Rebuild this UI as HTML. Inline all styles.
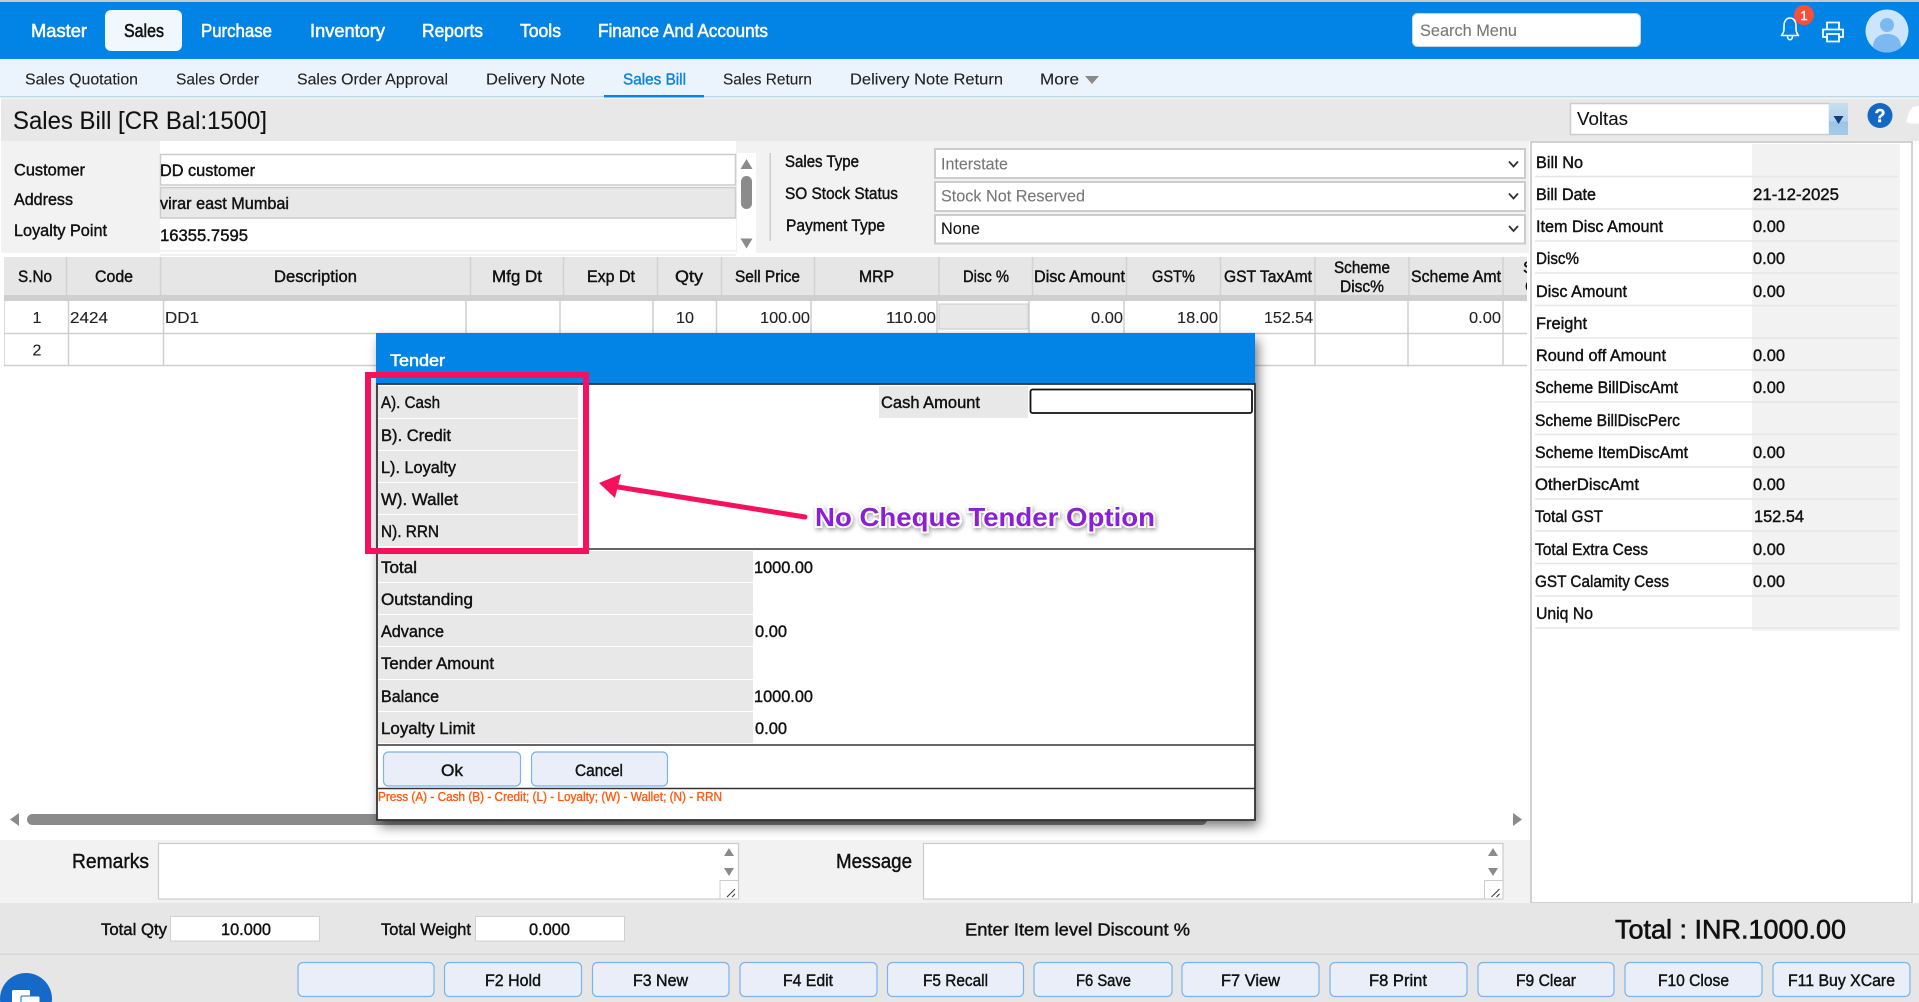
<!DOCTYPE html>
<html lang="en"><head><meta charset="utf-8"><title>Sales Bill</title>
<style>
html,body{margin:0;padding:0;background:#fff;width:1919px;height:1002px;overflow:hidden}
svg{display:block}
text{font-family:"Liberation Sans",sans-serif;font-size:16.5px;fill:#111;stroke:#111;stroke-width:.42}
.nav text{fill:#fff;stroke:#fff;font-size:18px;stroke-width:.55}
.sub text{stroke-width:.12;stroke:#222;font-size:16px;fill:#222}
.hd text{font-size:16.5px}
.td text{stroke-width:.12;stroke:#222;font-size:16px;fill:#222}
.wl{fill:#e8e8e8}
.ln{stroke:#d2d2d2;stroke-width:1.5}
.bt{fill:#e9eef8;stroke:#7ab3ee;stroke-width:1.2}
.cell{stroke:#cfcfcf;stroke-width:1.5}
</style></head><body>
<svg xmlns="http://www.w3.org/2000/svg" width="1919" height="1002" viewBox="0 0 1919 1002">
<defs>
<filter id="sh" x="-5%" y="-5%" width="110%" height="110%"><feGaussianBlur stdDeviation="6"/></filter>
<linearGradient id="ag" x1="0" y1="0" x2="0" y2="1"><stop offset="0" stop-color="#c7dff0"/><stop offset=".55" stop-color="#b5d4ec"/><stop offset=".6" stop-color="#9cc4e6"/><stop offset="1" stop-color="#a5cbea"/></linearGradient>
<clipPath id="tb"><rect x="4" y="250" width="1523" height="120"/></clipPath>
</defs>
<rect width="1919" height="1002" fill="#fff"/>
<rect width="1919" height="2" fill="#c9c9c9"/>
<rect y="2" width="1919" height="57" fill="#0284e7"/>
<rect x="105" y="10" width="77" height="41" rx="6" fill="#f0f7fd"/>
<g class="nav">
<text x="31" y="37" textLength="56" lengthAdjust="spacingAndGlyphs">Master</text>
<text x="124" y="37" textLength="40" lengthAdjust="spacingAndGlyphs" style="fill:#111;stroke:#111">Sales</text>
<text x="201" y="37" textLength="71" lengthAdjust="spacingAndGlyphs">Purchase</text>
<text x="310" y="37" textLength="75" lengthAdjust="spacingAndGlyphs">Inventory</text>
<text x="422" y="37" textLength="61" lengthAdjust="spacingAndGlyphs">Reports</text>
<text x="520" y="37" textLength="41" lengthAdjust="spacingAndGlyphs">Tools</text>
<text x="598" y="37" textLength="170" lengthAdjust="spacingAndGlyphs">Finance And Accounts</text>
</g>
<rect x="1412.5" y="13.5" width="228" height="33" rx="5" fill="#fff" stroke="#c5d5e2"/>
<text x="1420" y="36" textLength="97" lengthAdjust="spacingAndGlyphs" style="fill:#777;stroke:#777;stroke-width:.1">Search Menu</text>
<path d="M1781.500 35.500c2.500-3 2.500-5 2.500-9.500c0-5 2.500-8 6-8s6 3 6 8c0 4.500 0 6.500 2.500 9.500zM1787.500 36c0 5 5 5 5 0" fill="none" stroke="#fff" stroke-width="1.600" stroke-linejoin="round"/>
<circle cx="1804" cy="15" r="10" fill="#f4503c"/>
<text x="1804" y="20" text-anchor="middle" style="fill:#fff;stroke:#fff;font-size:13px">1</text>
<path d="M1827 30v-7.500h12v7.500M1827 37h-4v-7.500h20v7.500h-4M1827 34h12v7.500h-12z" fill="none" stroke="#fff" stroke-width="1.800"/>
<circle cx="1887" cy="31" r="21.500" fill="#cbe6fc"/>
<circle cx="1887" cy="25" r="7" fill="#7db8f0"/>
<path d="M1873 47c0-8 5-13 14-13s14 5 14 13c-4 4-9 5.500-14 5.500s-10-1.500-14-5.500z" fill="#7db8f0"/>

<rect y="59" width="1919" height="37" fill="#ebf4fc"/>
<rect y="96" width="1919" height="1.500" fill="#bcd7ea"/>
<g class="sub">
<text x="25" y="84.500" textLength="113" lengthAdjust="spacingAndGlyphs">Sales Quotation</text>
<text x="176" y="84.500" textLength="83" lengthAdjust="spacingAndGlyphs">Sales Order</text>
<text x="297" y="84.500" textLength="151" lengthAdjust="spacingAndGlyphs">Sales Order Approval</text>
<text x="486" y="84.500" textLength="99" lengthAdjust="spacingAndGlyphs">Delivery Note</text>
<text x="623" y="84.500" textLength="63" lengthAdjust="spacingAndGlyphs" style="fill:#0a84e3;stroke:#0a84e3;stroke-width:.4">Sales Bill</text>
<text x="723" y="84.500" textLength="89" lengthAdjust="spacingAndGlyphs">Sales Return</text>
<text x="850" y="84.500" textLength="153" lengthAdjust="spacingAndGlyphs">Delivery Note Return</text>
<text x="1040" y="84.500" textLength="39" lengthAdjust="spacingAndGlyphs">More</text>
</g>
<path d="M1085 76h14l-7 8z" fill="#8a8a8a"/>
<rect x="604" y="95" width="100" height="2.500" fill="#0a84e3"/>

<rect x="1" y="98.500" width="1918" height="42.500" fill="#e8e8e8"/>
<text x="13" y="129" textLength="254" lengthAdjust="spacingAndGlyphs" style="font-size:25px;stroke-width:.1">Sales Bill [CR Bal:1500]</text>
<rect x="1570.500" y="103.500" width="259" height="31" fill="#fff" stroke="#ccc" stroke-width="1.500"/>
<rect x="1829" y="103" width="19" height="32" fill="url(#ag)"/>
<path d="M1833.500 116h10l-5 8z" fill="#123f80"/>
<text x="1577" y="125" textLength="51" lengthAdjust="spacingAndGlyphs" style="font-size:18px;stroke-width:.1">Voltas</text>
<circle cx="1880" cy="115.500" r="12.500" fill="#1468c5"/>
<text x="1880" y="122" text-anchor="middle" style="fill:#fff;stroke:#fff;font-size:18px;font-weight:bold">?</text>
<path d="M1919 106l-6 1l-4 5l-3 10l4 1.500h9z" fill="#fff"/>

<rect x="1" y="141" width="1528" height="112" fill="#f2f2f2"/>
<rect x="160" y="254" width="576" height="2" fill="#f2f2f2"/>
<text x="14" y="175.500" textLength="71" lengthAdjust="spacingAndGlyphs">Customer</text>
<text x="14" y="205" textLength="59" lengthAdjust="spacingAndGlyphs">Address</text>
<text x="14" y="236" textLength="93" lengthAdjust="spacingAndGlyphs">Loyalty Point</text>
<rect x="160" y="141" width="576" height="112" fill="#fff"/>
<rect x="160.500" y="154.500" width="575" height="30.500" fill="#fff" stroke="#ccc" stroke-width="1.500"/>
<rect x="160.500" y="187.500" width="575" height="30.500" fill="#e8e8e8" stroke="#ccc" stroke-width="1.500"/>
<rect x="160" y="219" width="576" height="31" fill="#fff"/>
<rect x="160" y="250" width="576" height="1.500" fill="#eee"/>
<text x="160" y="176" textLength="95" lengthAdjust="spacingAndGlyphs">DD customer</text>
<text x="160" y="209" textLength="129" lengthAdjust="spacingAndGlyphs">virar east Mumbai</text>
<text x="160" y="241" textLength="88" lengthAdjust="spacingAndGlyphs">16355.7595</text>
<rect x="737" y="153" width="19" height="100" fill="#fff"/>
<path d="M740.500 169h12l-6-10z" fill="#8b8b8b"/>
<rect x="741" y="176" width="11" height="33" rx="5.500" fill="#8b8b8b"/>
<path d="M740.500 238.500h12l-6 10z" fill="#8b8b8b"/>
<rect x="769.500" y="153" width="1.500" height="88" fill="#ccc"/>
<text x="785" y="167" textLength="74" lengthAdjust="spacingAndGlyphs">Sales Type</text>
<text x="785" y="199" textLength="113" lengthAdjust="spacingAndGlyphs">SO Stock Status</text>
<text x="786" y="231" textLength="99" lengthAdjust="spacingAndGlyphs">Payment Type</text>
<g fill="#fff" stroke="#ccc" stroke-width="2">
<rect x="935" y="149" width="590" height="29"/>
<rect x="935" y="182" width="590" height="29"/>
<rect x="935" y="215" width="590" height="28.500"/>
</g>
<text x="941" y="169.500" textLength="67" lengthAdjust="spacingAndGlyphs" style="fill:#777;stroke:#777;stroke-width:.1">Interstate</text>
<text x="941" y="201.500" textLength="144" lengthAdjust="spacingAndGlyphs" style="fill:#777;stroke:#777;stroke-width:.1">Stock Not Reserved</text>
<text x="941" y="234" textLength="39" lengthAdjust="spacingAndGlyphs" style="stroke-width:.1">None</text>
<path d="M1509 161.500l4.500 5l4.500-5M1509 193.500l4.500 5l4.500-5M1509 226l4.500 5l4.500-5" fill="none" stroke="#333" stroke-width="1.800"/>

<g clip-path="url(#tb)">
<rect x="4" y="257" width="1530" height="38" fill="#e6e6e6"/>
<rect x="4" y="295" width="1530" height="6" fill="#cfcfcf"/>
<g class="ln">
<path d="M66.500 257v38M160.500 257v38M470.500 257v38M563.500 257v38M657.500 257v38M721.500 257v38M814.500 257v38M939 257v38M1032.500 257v38M1126.500 257v38M1220.500 257v38M1315 257v38M1409 257v38M1503 257v38"/>
</g>
<g class="hd">
<text x="18" y="282" textLength="34" lengthAdjust="spacingAndGlyphs">S.No</text>
<text x="95" y="282" textLength="38" lengthAdjust="spacingAndGlyphs">Code</text>
<text x="274" y="282" textLength="83" lengthAdjust="spacingAndGlyphs">Description</text>
<text x="492" y="282" textLength="50" lengthAdjust="spacingAndGlyphs">Mfg Dt</text>
<text x="587" y="282" textLength="48" lengthAdjust="spacingAndGlyphs">Exp Dt</text>
<text x="675" y="282" textLength="28" lengthAdjust="spacingAndGlyphs">Qty</text>
<text x="735" y="282" textLength="65" lengthAdjust="spacingAndGlyphs">Sell Price</text>
<text x="859" y="282" textLength="35" lengthAdjust="spacingAndGlyphs">MRP</text>
<text x="963" y="282" textLength="46" lengthAdjust="spacingAndGlyphs">Disc %</text>
<text x="1034" y="282" textLength="91" lengthAdjust="spacingAndGlyphs">Disc Amount</text>
<text x="1152" y="282" textLength="43" lengthAdjust="spacingAndGlyphs">GST%</text>
<text x="1224" y="282" textLength="88" lengthAdjust="spacingAndGlyphs">GST TaxAmt</text>
<text x="1334" y="273" textLength="56" lengthAdjust="spacingAndGlyphs">Scheme</text>
<text x="1340" y="292" textLength="44" lengthAdjust="spacingAndGlyphs">Disc%</text>
<text x="1411" y="282" textLength="90" lengthAdjust="spacingAndGlyphs">Scheme Amt</text>
<text x="1523" y="273">S</text>
<text x="1525" y="292">C</text>
</g>
<g class="cell" fill="none">
<path d="M4 333.500h1530M4 365.500h1530M4 301v64"/>
<path d="M68.500 301v64M163.500 301v64M466 301v64M560 301v64M653 301v64M716.500 301v64M811 301v64M937 301v64M1029 301v64M1124 301v64M1220 301v64M1315 301v64M1408 301v64M1503 301v64"/>
</g>
<rect x="939" y="304" width="89" height="25" fill="#e8e8e8" stroke="#ccc"/>
<g class="td">
<text x="37" y="323" text-anchor="middle">1</text>
<text x="70" y="323" textLength="38" lengthAdjust="spacingAndGlyphs">2424</text>
<text x="165" y="323" textLength="34" lengthAdjust="spacingAndGlyphs">DD1</text>
<text x="676" y="323" textLength="18" lengthAdjust="spacingAndGlyphs">10</text>
<text x="760" y="323" textLength="50" lengthAdjust="spacingAndGlyphs">100.00</text>
<text x="886" y="323" textLength="50" lengthAdjust="spacingAndGlyphs">110.00</text>
<text x="1091" y="323" textLength="32" lengthAdjust="spacingAndGlyphs">0.00</text>
<text x="1177" y="323" textLength="41" lengthAdjust="spacingAndGlyphs">18.00</text>
<text x="1264" y="323" textLength="49" lengthAdjust="spacingAndGlyphs">152.54</text>
<text x="1469" y="323" textLength="32" lengthAdjust="spacingAndGlyphs">0.00</text>
<text x="37" y="355.500" text-anchor="middle">2</text>
</g>
</g>

<rect x="1531" y="142" width="381" height="761" fill="#fff" stroke="#ccc" stroke-width="1.800"/>
<rect x="1752" y="144" width="148" height="487" fill="#f2f2f2"/>
<path d="M1535 176.500h363M1535 209h363M1535 241h363M1535 273h363M1535 305.500h363M1535 338h363M1535 370h363M1535 402h363M1535 434.500h363M1535 467h363M1535 499h363M1535 531h363M1535 563.500h363M1535 596h363M1535 628h363" stroke="#e6e6e6" stroke-width="1.500"/>
<text x="1536" y="168" textLength="47" lengthAdjust="spacingAndGlyphs">Bill No</text>
<text x="1536" y="200" textLength="60" lengthAdjust="spacingAndGlyphs">Bill Date</text>
<text x="1536" y="232" textLength="127" lengthAdjust="spacingAndGlyphs">Item Disc Amount</text>
<text x="1536" y="264" textLength="43" lengthAdjust="spacingAndGlyphs">Disc%</text>
<text x="1536" y="297" textLength="91" lengthAdjust="spacingAndGlyphs">Disc Amount</text>
<text x="1536" y="329" textLength="51" lengthAdjust="spacingAndGlyphs">Freight</text>
<text x="1536" y="361" textLength="130" lengthAdjust="spacingAndGlyphs">Round off Amount</text>
<text x="1535" y="393" textLength="143" lengthAdjust="spacingAndGlyphs">Scheme BillDiscAmt</text>
<text x="1535" y="426" textLength="145" lengthAdjust="spacingAndGlyphs">Scheme BillDiscPerc</text>
<text x="1535" y="458" textLength="153" lengthAdjust="spacingAndGlyphs">Scheme ItemDiscAmt</text>
<text x="1535" y="490" textLength="104" lengthAdjust="spacingAndGlyphs">OtherDiscAmt</text>
<text x="1535" y="522" textLength="68" lengthAdjust="spacingAndGlyphs">Total GST</text>
<text x="1535" y="555" textLength="113" lengthAdjust="spacingAndGlyphs">Total Extra Cess</text>
<text x="1535" y="587" textLength="134" lengthAdjust="spacingAndGlyphs">GST Calamity Cess</text>
<text x="1536" y="619" textLength="57" lengthAdjust="spacingAndGlyphs">Uniq No</text>
<text x="1753" y="200" textLength="86" lengthAdjust="spacingAndGlyphs">21-12-2025</text>
<text x="1753" y="232" textLength="32" lengthAdjust="spacingAndGlyphs">0.00</text>
<text x="1753" y="264" textLength="32" lengthAdjust="spacingAndGlyphs">0.00</text>
<text x="1753" y="297" textLength="32" lengthAdjust="spacingAndGlyphs">0.00</text>
<text x="1753" y="361" textLength="32" lengthAdjust="spacingAndGlyphs">0.00</text>
<text x="1753" y="393" textLength="32" lengthAdjust="spacingAndGlyphs">0.00</text>
<text x="1753" y="458" textLength="32" lengthAdjust="spacingAndGlyphs">0.00</text>
<text x="1753" y="490" textLength="32" lengthAdjust="spacingAndGlyphs">0.00</text>
<text x="1754" y="522" textLength="50" lengthAdjust="spacingAndGlyphs">152.54</text>
<text x="1753" y="555" textLength="32" lengthAdjust="spacingAndGlyphs">0.00</text>
<text x="1753" y="587" textLength="32" lengthAdjust="spacingAndGlyphs">0.00</text>

<path d="M19 813v13l-9-6.500z" fill="#8b8b8b"/>
<rect x="27" y="814" width="1180" height="11" rx="5.500" fill="#8b8b8b"/>
<path d="M1513 813v13l9-6.500z" fill="#8b8b8b"/>

<rect y="840" width="1530" height="63" fill="#f2f2f2"/>
<text x="72" y="868" textLength="77" lengthAdjust="spacingAndGlyphs" style="font-size:20px">Remarks</text>
<text x="836" y="868" textLength="76" lengthAdjust="spacingAndGlyphs" style="font-size:20px">Message</text>
<rect x="158.500" y="843.500" width="580" height="55.500" fill="#fff" stroke="#ccc" stroke-width="1.200"/>
<rect x="923.500" y="843.500" width="579.500" height="55.500" fill="#fff" stroke="#ccc" stroke-width="1.200"/>
<g fill="#8b8b8b"><path d="M724 856h10l-5-8zM724 868h10l-5 8zM1488 856h10l-5-8zM1488 868h10l-5 8z"/></g>
<g fill="#fff" stroke="#ccc"><rect x="720" y="880.500" width="18.500" height="18.500"/><rect x="1484.500" y="880.500" width="18.500" height="18.500"/></g>
<path d="M727 897l8-8M732 897l3-3M1491.500 897l8-8M1496.500 897l3-3" stroke="#444" stroke-width="1.100"/>

<rect y="903" width="1919" height="99" fill="#e6e6e6"/>
<rect y="953.500" width="1919" height="1.500" fill="#d8d8d8"/>
<text x="101" y="935" textLength="66" lengthAdjust="spacingAndGlyphs">Total Qty</text>
<rect x="170.500" y="916.500" width="149" height="24.500" fill="#fff" stroke="#d0d0d0"/>
<text x="221" y="935" textLength="50" lengthAdjust="spacingAndGlyphs">10.000</text>
<text x="381" y="935" textLength="90" lengthAdjust="spacingAndGlyphs">Total Weight</text>
<rect x="475.500" y="916.500" width="149" height="24.500" fill="#fff" stroke="#d0d0d0"/>
<text x="529" y="935" textLength="41" lengthAdjust="spacingAndGlyphs">0.000</text>
<text x="965" y="935.500" textLength="225" lengthAdjust="spacingAndGlyphs" style="font-size:17.500px">Enter Item level Discount %</text>
<text x="1615" y="938.500" textLength="231" lengthAdjust="spacingAndGlyphs" style="font-size:27px;stroke-width:.6">Total : INR.1000.00</text>

<g class="bt">
<rect x="298" y="962.500" width="136" height="34" rx="5"/>
<rect x="444.500" y="962.500" width="137" height="34" rx="5"/>
<rect x="592.500" y="962.500" width="136.500" height="34" rx="5"/>
<rect x="740" y="962.500" width="137" height="34" rx="5"/>
<rect x="887.500" y="962.500" width="136" height="34" rx="5"/>
<rect x="1034" y="962.500" width="138" height="34" rx="5"/>
<rect x="1182" y="962.500" width="137" height="34" rx="5"/>
<rect x="1330" y="962.500" width="137" height="34" rx="5"/>
<rect x="1478" y="962.500" width="136" height="34" rx="5"/>
<rect x="1625" y="962.500" width="137" height="34" rx="5"/>
<rect x="1773" y="962.500" width="137" height="34" rx="5"/>
</g>
<text x="485" y="986" textLength="56" lengthAdjust="spacingAndGlyphs">F2 Hold</text>
<text x="633" y="986" textLength="55" lengthAdjust="spacingAndGlyphs">F3 New</text>
<text x="783" y="986" textLength="50" lengthAdjust="spacingAndGlyphs">F4 Edit</text>
<text x="923" y="986" textLength="65" lengthAdjust="spacingAndGlyphs">F5 Recall</text>
<text x="1076" y="986" textLength="55" lengthAdjust="spacingAndGlyphs">F6 Save</text>
<text x="1221" y="986" textLength="59" lengthAdjust="spacingAndGlyphs">F7 View</text>
<text x="1369" y="986" textLength="58" lengthAdjust="spacingAndGlyphs">F8 Print</text>
<text x="1516" y="986" textLength="60" lengthAdjust="spacingAndGlyphs">F9 Clear</text>
<text x="1658" y="986" textLength="71" lengthAdjust="spacingAndGlyphs">F10 Close</text>
<text x="1788" y="986" textLength="107" lengthAdjust="spacingAndGlyphs">F11 Buy XCare</text>
<circle cx="26" cy="999" r="26" fill="#1669c9"/>
<rect x="12" y="990" width="18" height="14" rx="1.500" fill="#fff"/>
<rect x="21" y="996" width="19" height="10" rx="1.500" fill="#fff" stroke="#1669c9"/>

<rect x="380" y="340" width="878" height="486" fill="#000" opacity=".55" filter="url(#sh)"/>
<rect x="376" y="333" width="879" height="51" fill="#0284e7"/>
<rect x="377" y="384" width="878" height="436" fill="#fff" stroke="#333" stroke-width="1.800"/>
<text x="390" y="366" textLength="55" lengthAdjust="spacingAndGlyphs" style="fill:#fff;stroke:#fff;font-size:17px;stroke-width:.55">Tender</text>
<g class="wl">
<rect x="378" y="386" width="200" height="32"/>
<rect x="378" y="419" width="200" height="31"/>
<rect x="378" y="451" width="200" height="31"/>
<rect x="378" y="483" width="200" height="31"/>
<rect x="378" y="515" width="200" height="31"/>
<rect x="879" y="386" width="149" height="32"/>
<rect x="378" y="551" width="375" height="31"/>
<rect x="378" y="583" width="375" height="31"/>
<rect x="378" y="615" width="375" height="31"/>
<rect x="378" y="647" width="375" height="32"/>
<rect x="378" y="680" width="375" height="31"/>
<rect x="378" y="712" width="375" height="31"/>
</g>
<rect x="1030.500" y="389.500" width="221.500" height="23.500" rx="2" fill="#fff" stroke="#111" stroke-width="1.800"/>
<path d="M378 549h877M378 745h877M378 788.500h877" stroke="#333" stroke-width="1.500"/>
<text x="381" y="408" textLength="59" lengthAdjust="spacingAndGlyphs">A). Cash</text>
<text x="381" y="441" textLength="70" lengthAdjust="spacingAndGlyphs">B). Credit</text>
<text x="381" y="473" textLength="75" lengthAdjust="spacingAndGlyphs">L). Loyalty</text>
<text x="381" y="505" textLength="77" lengthAdjust="spacingAndGlyphs">W). Wallet</text>
<text x="381" y="537" textLength="58" lengthAdjust="spacingAndGlyphs">N). RRN</text>
<text x="881" y="408" textLength="99" lengthAdjust="spacingAndGlyphs">Cash Amount</text>
<text x="381" y="573" textLength="36" lengthAdjust="spacingAndGlyphs">Total</text>
<text x="381" y="605" textLength="92" lengthAdjust="spacingAndGlyphs">Outstanding</text>
<text x="381" y="637" textLength="63" lengthAdjust="spacingAndGlyphs">Advance</text>
<text x="381" y="669" textLength="113" lengthAdjust="spacingAndGlyphs">Tender Amount</text>
<text x="381" y="702" textLength="58" lengthAdjust="spacingAndGlyphs">Balance</text>
<text x="381" y="734" textLength="94" lengthAdjust="spacingAndGlyphs">Loyalty Limit</text>
<text x="754" y="573" textLength="59" lengthAdjust="spacingAndGlyphs">1000.00</text>
<text x="755" y="637" textLength="32" lengthAdjust="spacingAndGlyphs">0.00</text>
<text x="754" y="702" textLength="59" lengthAdjust="spacingAndGlyphs">1000.00</text>
<text x="755" y="734" textLength="32" lengthAdjust="spacingAndGlyphs">0.00</text>
<rect class="bt" x="383.500" y="752" width="137" height="34" rx="5"/>
<rect class="bt" x="531.500" y="752" width="136" height="34" rx="5"/>
<text x="441" y="776" textLength="22" lengthAdjust="spacingAndGlyphs">Ok</text>
<text x="575" y="776" textLength="48" lengthAdjust="spacingAndGlyphs">Cancel</text>
<text x="378" y="801" textLength="344" lengthAdjust="spacingAndGlyphs" style="fill:#ff5a10;stroke:#ff5a10;font-size:12.500px;stroke-width:.35">Press (A) - Cash (B) - Credit; (L) - Loyalty; (W) - Wallet; (N) - RRN</text>

<rect x="368" y="375" width="218" height="176" fill="none" stroke="#f5115b" stroke-width="6"/>
<path d="M805 517L612 486" stroke="#f5115b" stroke-width="5" stroke-linecap="round"/>
<path d="M599 483L621 474L615 498z" fill="#f5115b"/>
<text x="815" y="526" textLength="340" lengthAdjust="spacingAndGlyphs" style="font-size:26px;font-weight:bold;fill:#8a1fd6;stroke:#fff;stroke-width:4;paint-order:stroke;filter:drop-shadow(1px 2px 2px rgba(0,0,0,.35))">No Cheque Tender Option</text>
</svg>
</body></html>
